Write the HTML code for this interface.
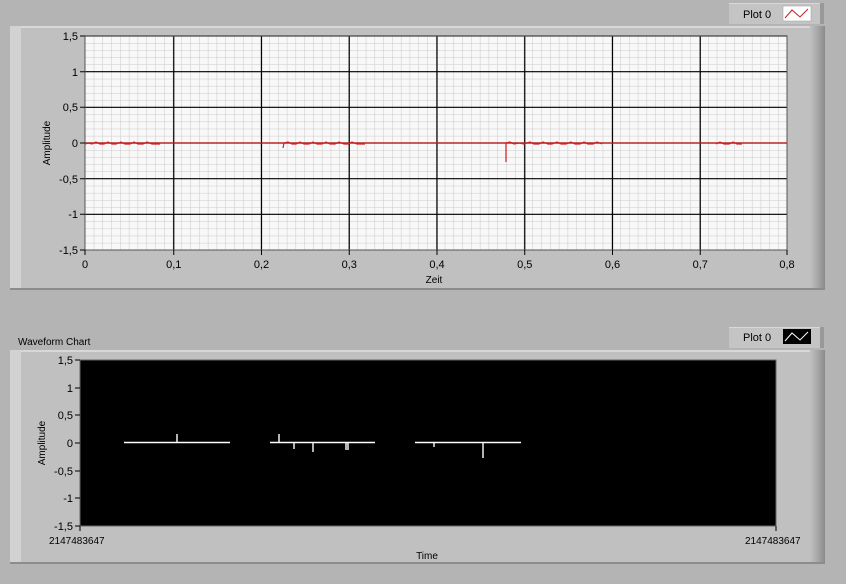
<!DOCTYPE html>
<html><head><meta charset="utf-8"><style>
html,body{margin:0;padding:0;background:#b4b4b4;}
svg{display:block;font-family:"Liberation Sans",sans-serif;}
</style></head><body>
<svg width="846" height="584" viewBox="0 0 846 584" xmlns="http://www.w3.org/2000/svg">
<defs>
<pattern id="mg" x="85" y="36" width="8.775" height="7.133" patternUnits="userSpaceOnUse">
<path d="M0 0V7.133M0 0H8.775" stroke="#c8c8c8" stroke-width="1" fill="none"/>
</pattern>
<linearGradient id="rs" x1="0" x2="1"><stop offset="0" stop-color="#c0c0c0"/><stop offset="0.5" stop-color="#a8a8a8"/><stop offset="1" stop-color="#8a8a8a"/></linearGradient>
</defs>
<rect width="846" height="584" fill="#b4b4b4"/>
<!-- top panel -->
<rect x="10" y="26" width="815" height="264" fill="#c0c0c0"/>
<rect x="10" y="26" width="815" height="2" fill="#d8d8d8"/>
<rect x="10" y="26" width="11" height="264" fill="#d2d2d2"/>
<rect x="810" y="26" width="15" height="264" fill="url(#rs)"/>
<rect x="10" y="288" width="815" height="2" fill="#8c8c8c"/>
<!-- legend top -->
<rect x="729" y="3" width="95" height="21" fill="#c4c4c4"/>
<rect x="729" y="3" width="95" height="1" fill="#d8d8d8"/>
<rect x="820" y="3" width="4" height="21" fill="#999"/>
<text x="743" y="18" font-size="11" fill="#000">Plot 0</text>
<rect x="783" y="6" width="28" height="15" fill="#fff" stroke="#999" stroke-width="0.5"/>
<path d="M785 18L792 10L800 17L808 9" stroke="#c02020" fill="none" stroke-width="1"/>
<!-- plot area -->
<rect x="85" y="36" width="702" height="214" fill="#f8f8f8"/>
<rect x="85" y="36" width="702" height="214" fill="url(#mg)"/>
<g stroke="#000" stroke-width="1.2">
<path d="M85 36H787M85 71.7H787M85 107.3H787M85 143H787M85 178.7H787M85 214.3H787"/>
<path d="M173.75 36V250M261.5 36V250M349.25 36V250M437 36V250M524.75 36V250M612.5 36V250M700.25 36V250"/>
</g>
<rect x="85" y="36" width="702" height="214" fill="none" stroke="#555" stroke-width="1"/>
<!-- y ticks -->
<g stroke="#000" stroke-width="1"><path d="M80 36H85M80 71.7H85M80 107.3H85M80 143H85M80 178.7H85M80 214.3H85M80 250H85"/>
<path d="M85 250V255M173.75 250V255M261.5 250V255M349.25 250V255M437 250V255M524.75 250V255M612.5 250V255M700.25 250V255M787 250V255"/></g>
<g font-size="11" fill="#000" text-anchor="end">
<text x="78" y="40">1,5</text><text x="78" y="76">1</text><text x="78" y="111">0,5</text><text x="78" y="147">0</text><text x="78" y="183">-0,5</text><text x="78" y="218">-1</text><text x="78" y="254">-1,5</text>
</g>
<g font-size="11" fill="#000" text-anchor="middle">
<text x="85" y="268">0</text><text x="173.75" y="268">0,1</text><text x="261.5" y="268">0,2</text><text x="349.25" y="268">0,3</text><text x="437" y="268">0,4</text><text x="524.75" y="268">0,5</text><text x="612.5" y="268">0,6</text><text x="700.25" y="268">0,7</text><text x="787" y="268">0,8</text>
<text x="434" y="283" font-size="10">Zeit</text>
</g>
<text transform="translate(50,143) rotate(-90)" font-size="10" text-anchor="middle">Amplitude</text>
<!-- red trace -->
<path d="M85 143H787" stroke="#d02020" stroke-width="1.2"/>
<g stroke="#d02020" stroke-width="1.2" fill="none">
<path d="M85 144L88 143L92 144L96 142L100 144L104 144L108 142L112 144L116 144L121 142L125 144L130 144L134 142L138 144L143 144L147 142L152 144L160 144"/>
<path d="M283 148L284 143L288 142L292 144L296 144L300 142L304 144L309 144L313 142L317 144L322 144L326 142L330 144L335 144L339 142L344 144L348 144L352 142L357 144L365 144"/>
<path d="M506 162L506 143L510 142L514 144L519 143L524 144L530 142L534 144L539 144L543 142L548 144L552 144L557 142L561 144L566 144L571 142L575 144L580 144L584 142L588 144L593 144L597 142L602 144"/>
<path d="M716 144L720 142L724 144L729 144L733 142L737 144L742 144"/>
</g>
<!-- bottom -->
<text x="18" y="345" font-size="10" fill="#000">Waveform Chart</text>
<rect x="10" y="350" width="815" height="214" fill="#c0c0c0"/>
<rect x="10" y="350" width="815" height="2" fill="#d8d8d8"/>
<rect x="10" y="350" width="11" height="214" fill="#d2d2d2"/>
<rect x="810" y="350" width="15" height="214" fill="url(#rs)"/>
<rect x="10" y="562" width="815" height="2" fill="#8c8c8c"/>
<rect x="729" y="327" width="95" height="21" fill="#c4c4c4"/>
<rect x="729" y="327" width="95" height="1" fill="#d8d8d8"/>
<rect x="820" y="327" width="4" height="21" fill="#999"/>
<text x="743" y="341" font-size="11" fill="#000">Plot 0</text>
<rect x="783" y="329" width="28" height="15" fill="#000"/>
<path d="M785 341L792 333L800 340L808 332" stroke="#fff" fill="none" stroke-width="1"/>
<rect x="80" y="360" width="696" height="166" fill="#000"/>
<rect x="80" y="360" width="696" height="166" fill="none" stroke="#666" stroke-width="1"/>
<g stroke="#000"><path d="M75 360H80M75 388H80M75 415H80M75 443H80M75 471H80M75 498H80M75 526H80M80 526V531M776 526V531"/></g>
<g font-size="11" fill="#000" text-anchor="end">
<text x="73" y="364">1,5</text><text x="73" y="392">1</text><text x="73" y="419">0,5</text><text x="73" y="447">0</text><text x="73" y="475">-0,5</text><text x="73" y="502">-1</text><text x="73" y="530">-1,5</text>
</g>
<text x="49" y="544" font-size="10">2147483647</text>
<text x="745" y="544" font-size="10">2147483647</text>
<text x="427" y="559" font-size="10" text-anchor="middle">Time</text>
<text transform="translate(45,443) rotate(-90)" font-size="10" text-anchor="middle">Amplitude</text>
<g stroke="#fff" stroke-width="1.4" fill="none">
<path d="M124 442.5H230M270 442.5H375M415 442.5H521"/>
<path d="M177 442V434M279 442V434M294 443V449M313 443V452M346 443V450M348 443V450M434 443V447M483 443V458"/>
</g>
</svg>
</body></html>
